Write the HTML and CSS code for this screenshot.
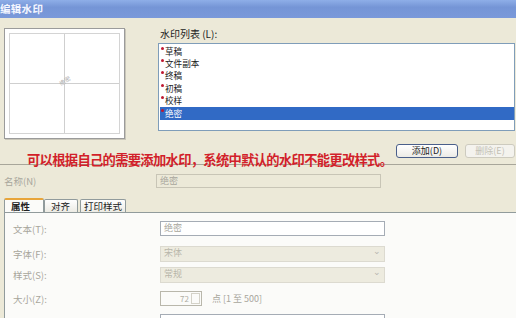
FILE: index.html
```html
<!DOCTYPE html>
<html lang="zh">
<head>
<meta charset="utf-8">
<link rel="stylesheet" href="styles.css">
</head>
<body>
<div class="win">
  <div class="titlebar"><span class="title">编辑水印</span></div>
  <div class="top">
    <div class="preview">
      <div class="margin">
        <div class="vline"></div>
        <div class="hline"></div>
        <span class="mark">绝密</span>
      </div>
    </div>
    <div class="rightcol">
      <div class="lbl-list">水印列表 (L):</div>
      <div class="listbox">
        <div class="item"><i class="dot"></i>草稿</div>
        <div class="item"><i class="dot"></i>文件副本</div>
        <div class="item"><i class="dot"></i>终稿</div>
        <div class="item"><i class="dot"></i>初稿</div>
        <div class="item"><i class="dot"></i>校样</div>
        <div class="item sel"><i class="dot"></i>绝密</div>
      </div>
      <div class="btnrow">
        <div class="btn">添加(D)</div>
        <div class="btn dis">删除(E)</div>
      </div>
    </div>
  </div>
  <div class="note">
    <div class="sep"></div>
    <span class="notetext">可以根据自己的需要添加水印，系统中默认的水印不能更改样式。</span>
  </div>
  <div class="namerow">
    <span class="lbl">名称(N)</span>
    <div class="field dis-field">绝密</div>
  </div>
  <div class="tabs">
    <div class="tab active">属性</div>
    <div class="tab t2">对齐</div>
    <div class="tab t3">打印样式</div>
  </div>
  <div class="panel">
    <div class="row r1"><span class="lbl">文本(T):</span><div class="field white">绝密</div></div>
    <div class="row r2"><span class="lbl">字体(F):</span><div class="field combo">宋体<span class="arrow">⌄</span></div></div>
    <div class="row r3"><span class="lbl">样式(S):</span><div class="field combo">常规<span class="arrow">⌄</span></div></div>
    <div class="row r4"><span class="lbl">大小(Z):</span><div class="spin"><span class="num">72</span><span class="spinbtn"></span></div><span class="unit">点 [1 至 500]</span></div>
    <div class="row r5"><span class="lbl"></span><div class="field white"></div></div>
  </div>
</div>
</body>
</html>
```
FILE: styles.css
```css
* { box-sizing: border-box; }
html, body { margin: 0; padding: 0; }
body {
  width: 516px; height: 318px; overflow: hidden;
  background: #ece9d8;
  font-family: "Noto Sans CJK SC", "Noto Sans", sans-serif;
  font-size: 10px;
  color: #333;
}
.win { width: 516px; height: 318px; display: flex; flex-direction: column; }
.titlebar {
  height: 18px; flex: none;
  background: linear-gradient(#8eaee8, #7595d6 40%, #7a99da);
  display: flex; align-items: center; padding-left: 0;
}
.title { color: #f4f6ff; font-size: 10.5px; font-weight: bold; letter-spacing: 0.3px; line-height: 12px; }
.top { display: flex; margin-top: 10px; height: 130px; flex: none; }
.preview {
  margin-left: 4px; width: 121px; height: 111px;
  background: #fff;
  border: 1px solid #9b9b9b;
  box-shadow: 1px 1px 0 #c9c6b8;
  padding: 4px;
}
.margin { position: relative; width: 100%; height: 100%; border: 1px solid #d4d4d4; }
.vline { position: absolute; left: 54px; top: 0; bottom: 0; width: 1px; background: #cfcfcf; }
.hline { position: absolute; top: 49px; left: 0; right: 0; height: 1px; background: #cfcfcf; }
.mark { position: absolute; left: 49px; top: 44px; font-size: 6px; line-height: 6px; color: #b0b0b0; transform: rotate(-35deg); }
.rightcol { margin-left: 33px; width: 357px; display: flex; flex-direction: column; }
.lbl-list { height: 15px; line-height: 11px; padding-left: 2px; color: #222; font-size: 10px; }
.listbox {
  height: 90px; background: #fff;
  border: 1px solid #7f9db9;
  padding: 1px 0 0 1px;
}
.item { height: 12.4px; line-height: 12.4px; padding-left: 5px; position: relative; color: #222; font-size: 8.6px; }
.item.sel { background: #316ac5; color: #fff; margin-top: 0.6px; }
.dot { position: absolute; left: 1px; top: 2px; width: 3px; height: 3px; border-radius: 50%; background: #c01830; }
.btnrow { display: flex; justify-content: flex-end; gap: 7px; margin-top: 13px; }
.btn {
  width: 62px; height: 14px; line-height: 12px; text-align: center;
  border: 1px solid #4a5f8a; border-radius: 3px;
  background: linear-gradient(#ffffff, #ecebe6);
  font-size: 9px; color: #222;
}
.btn.dis { width: 50px; border-color: #cdcbbf; color: #c3c1b5; background: #f4f3ee; }
.note { position: relative; height: 14px; margin-top: -4px; flex: none; }
.sep { position: absolute; left: 0; right: 0; top: 10px; height: 1px; background: #a8a69a; }
.notetext {
  position: absolute; left: 27px; top: -2px;
  color: #d21f2a; font-size: 13.3px; font-weight: bold; letter-spacing: -0.7px;
  line-height: 16px;
}
.namerow { display: flex; align-items: center; height: 14px; margin-top: 6px; flex: none; }
.lbl { width: 156px; padding-left: 4px; color: #a8a69c; font-size: 9.5px; flex: none; line-height: 12px; }
.field {
  width: 225px; height: 14px; line-height: 12px; padding-left: 3px;
  border: 1px solid #b9b7ab; font-size: 9px; color: #a8a69c;
}
.dis-field { background: #ece9d8; border-color: #c8c5b6; }
.tabs { display: flex; margin-top: 10px; padding-left: 4px; height: 14px; flex: none; align-items: flex-end; }
.tab {
  height: 13px; line-height: 12px; padding: 0 3px; font-size: 9.5px; color: #222;
  border: 1px solid #919b9c; border-bottom: none; border-radius: 2px 2px 0 0;
  background: linear-gradient(#fefefe, #ecebe4);
  margin-right: 2px; white-space: nowrap;
}
.tab.active {
  height: 14px; width: 40px; padding-left: 6px; font-weight: bold; margin-right: 0;
  border-top: 2px solid #e8a53a; background: #fbfbf9;
}
.t2 { width: 34px; padding-left: 6px; }
.t3 { padding: 0 3px; }
.panel {
  flex: 1; margin-left: 4px; background: #fbfbf9;
  border-left: 1px solid #919b9c; border-top: 1px solid #919b9c;
  padding-top: 8px;
}
.panel .lbl { width: 155px; padding-left: 8px; }
.row { display: flex; align-items: center; height: 15px; }
.r2 { margin-top: 10px; }
.r3 { margin-top: 6px; }
.r4 { margin-top: 9px; }
.r5 { margin-top: 8px; }
.white { background: #fff; border-color: #a5acb5; height: 15px; }
.combo { background: #edebdf; border-color: #dcdad0; height: 16px; position: relative; color: #b8b6aa; }
.arrow { position: absolute; right: 3px; top: -2px; font-size: 9px; color: #b8b6b0; }
.spin {
  width: 42px; height: 15px; border: 1px solid #b9b7ab; background: #fbfbf9;
  display: flex; justify-content: flex-end; align-items: center; font-size: 8px; color: #b0aea4;
}
.num { margin-right: 2px; }
.spinbtn { width: 9px; height: 11px; border: 1px solid #d4d2c8; margin-right: 1px; }
.unit { margin-left: 10px; font-size: 9px; color: #a8a69c; }
```
